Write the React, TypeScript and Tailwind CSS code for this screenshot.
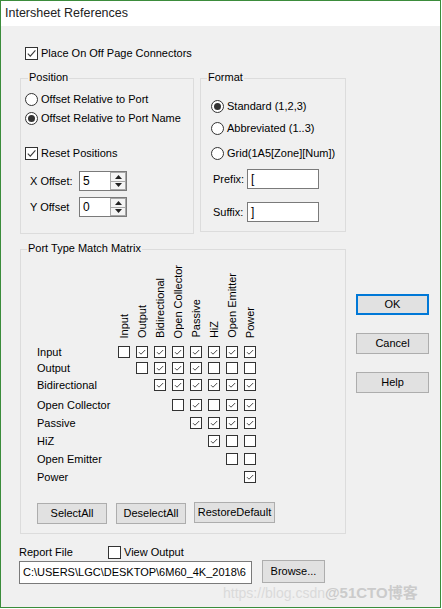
import React from "react";

function CheckBox({ checked }: { checked: boolean }) {
  return (
    <div className="w-[13px] h-[13px] shrink-0 border border-[#333333] bg-white flex items-center justify-center">
      {checked && (
        <svg width="11" height="11" viewBox="0 0 11 11">
          <polyline points="1.8,5.6 4.3,8.2 9.4,2.4" fill="none" stroke="#3a3a3a" strokeWidth="1.1" />
        </svg>
      )}
    </div>
  );
}

function MiniBox({ checked }: { checked: boolean }) {
  return (
    <div className="w-[12px] h-[12px] border border-[#333333] bg-white flex items-center justify-center">
      {checked && (
        <svg width="10" height="10" viewBox="0 0 10 10">
          <polyline points="2,5.2 4,7.2 8.2,3" fill="none" stroke="#4a4a4a" strokeWidth="1" />
        </svg>
      )}
    </div>
  );
}

function Radio({ selected }: { selected: boolean }) {
  return (
    <div className="w-[13px] h-[13px] shrink-0 rounded-full border border-[#333333] bg-white flex items-center justify-center">
      {selected && <div className="w-[7px] h-[7px] rounded-full bg-[#333333]" />}
    </div>
  );
}

function Button({ label, className }: { label: string; className: string }) {
  return (
    <div
      className={
        "h-[21px] bg-[#e1e1e1] border border-[#adadad] flex items-center justify-center text-[11px] leading-none " +
        className
      }
    >
      {label}
    </div>
  );
}

function Spin({ value }: { value: string }) {
  return (
    <div className="w-[48px] h-[20px] border border-[#7a7a7a] bg-white flex">
      <div className="flex-1 flex items-center pl-[3px] text-[12px] leading-none">{value}</div>
      <div className="w-[16px] h-full flex flex-col">
        <div className="flex-1 border border-[#a8a8a8] bg-[#f4f4f4] flex items-center justify-center">
          <svg width="7" height="4" viewBox="0 0 7 4">
            <polygon points="0,4 3.5,0 7,4" fill="#222" />
          </svg>
        </div>
        <div className="flex-1 border border-t-0 border-[#a8a8a8] bg-[#f4f4f4] flex items-center justify-center">
          <svg width="7" height="4" viewBox="0 0 7 4">
            <polygon points="0,0 3.5,4 7,0" fill="#222" />
          </svg>
        </div>
      </div>
    </div>
  );
}

const cols = ["Input", "Output", "Bidirectional", "Open Collector", "Passive", "HiZ", "Open Emitter", "Power"];

const rows: { label: string; start: number; cells: number[]; h: string }[] = [
  { label: "Input", start: 0, cells: [0, 1, 1, 1, 1, 1, 1, 1], h: "h-[16px]" },
  { label: "Output", start: 1, cells: [0, 1, 1, 1, 0, 0, 0], h: "h-[17px]" },
  { label: "Bidirectional", start: 2, cells: [1, 1, 1, 1, 1, 1], h: "h-[20px]" },
  { label: "Open Collector", start: 3, cells: [0, 1, 0, 1, 1], h: "h-[18px]" },
  { label: "Passive", start: 4, cells: [1, 1, 1, 1], h: "h-[18px]" },
  { label: "HiZ", start: 5, cells: [1, 0, 0], h: "h-[18px]" },
  { label: "Open Emitter", start: 6, cells: [0, 0], h: "h-[18px]" },
  { label: "Power", start: 7, cells: [1], h: "h-[12px]" },
];

export default function App() {
  return (
    <div className="relative w-[441px] h-[608px] border border-[#3b8c3b] bg-[#f0f0f0] text-black font-['Liberation_Sans',Arial,sans-serif] text-[11px] overflow-hidden">
      {/* Title bar */}
      <div className="h-[25px] bg-white flex items-center pl-[4px] text-[12.5px] text-[#222]">Intersheet References</div>

      {/* Body */}
      <div className="pl-[19px] flex flex-col">
        <div className="mt-[21px] ml-[5px] h-[13px] flex items-center gap-[3px]">
          <CheckBox checked />
          <span className="leading-none">Place On Off Page Connectors</span>
        </div>

        <div className="mt-[18px] flex items-start">
          {/* left column */}
          <div className="w-[326px] flex flex-col">
            <div className="flex items-start">
              {/* Position */}
              <div className="relative w-[174px] h-[156px] border border-[#dcdcdc] pl-[4px] flex flex-col">
                <span className="absolute -top-[8px] left-[7px] px-[1px] bg-[#f0f0f0] leading-[13px]">Position</span>
                <div className="mt-[14px] h-[13px] flex items-center gap-[3px]">
                  <Radio selected={false} />
                  <span className="leading-none">Offset Relative to Port</span>
                </div>
                <div className="mt-[6px] h-[13px] flex items-center gap-[3px]">
                  <Radio selected />
                  <span className="leading-none">Offset Relative to Port Name</span>
                </div>
                <div className="mt-[22px] h-[13px] flex items-center gap-[3px]">
                  <CheckBox checked />
                  <span className="leading-none">Reset Positions</span>
                </div>
                <div className="mt-[11px] pl-[5px] h-[20px] flex items-center">
                  <span className="w-[49px] leading-none">X Offset:</span>
                  <Spin value="5" />
                </div>
                <div className="mt-[6px] pl-[5px] h-[20px] flex items-center">
                  <span className="w-[49px] leading-none">Y Offset</span>
                  <Spin value="0" />
                </div>
              </div>

              {/* Format */}
              <div className="relative ml-[6px] w-[146px] h-[154px] border border-[#dcdcdc] pl-[10px] flex flex-col">
                <span className="absolute -top-[8px] left-[6px] px-[1px] bg-[#f0f0f0] leading-[13px]">Format</span>
                <div className="mt-[21px] h-[13px] flex items-center gap-[3px]">
                  <Radio selected />
                  <span className="leading-none">Standard (1,2,3)</span>
                </div>
                <div className="mt-[9px] h-[13px] flex items-center gap-[3px]">
                  <Radio selected={false} />
                  <span className="leading-none">Abbreviated (1..3)</span>
                </div>
                <div className="mt-[12px] h-[13px] flex items-center gap-[3px]">
                  <Radio selected={false} />
                  <span className="leading-none">Grid(1A5[Zone][Num])</span>
                </div>
                <div className="mt-[9px] pl-[2px] h-[20px] flex items-center">
                  <span className="w-[34px] leading-none">Prefix:</span>
                  <div className="w-[72px] h-[20px] border border-[#7a7a7a] bg-white flex items-center pl-[3px] text-[12px] leading-none">[</div>
                </div>
                <div className="mt-[13px] pl-[2px] h-[20px] flex items-center">
                  <span className="w-[34px] leading-none">Suffix:</span>
                  <div className="w-[72px] h-[20px] border border-[#7a7a7a] bg-white flex items-center pl-[3px] text-[12px] leading-none">]</div>
                </div>
              </div>
            </div>

            {/* Matrix */}
            <div className="relative mt-[15px] w-[326px] h-[285px] border border-[#dcdcdc] pl-[16px] flex flex-col">
              <span className="absolute -top-[8px] left-[6px] px-[1px] bg-[#f0f0f0] leading-[13px]">Port Type Match Matrix</span>
              <div className="h-[88px] flex">
                <div className="w-[81px]" />
                <div className="grid grid-cols-[repeat(8,12px)] gap-x-[6px] h-full">
                  {cols.map((c) => (
                    <div key={c} className="h-full flex items-end justify-center">
                      <span className="[writing-mode:vertical-rl] rotate-180 leading-[12px] whitespace-nowrap">{c}</span>
                    </div>
                  ))}
                </div>
              </div>
              <div className="mt-[8px] flex flex-col">
                {rows.map((r) => (
                  <div key={r.label} className={"flex items-start " + r.h}>
                    <div className="w-[81px] h-[12px] flex items-center leading-none whitespace-nowrap">{r.label}</div>
                    <div className="grid grid-cols-[repeat(8,12px)] gap-x-[6px]">
                      {cols.map((c, i) => (
                        <div key={c} className="w-[12px] h-[12px]">
                          {i >= r.start && <MiniBox checked={r.cells[i - r.start] === 1} />}
                        </div>
                      ))}
                    </div>
                  </div>
                ))}
              </div>
              <div className="mt-[20px] flex items-start">
                <Button label="SelectAll" className="w-[70px]" />
                <Button label="DeselectAll" className="ml-[9px] w-[70px]" />
                <Button label="RestoreDefault" className="ml-[8px] w-[81px] -mt-px" />
              </div>
            </div>
          </div>

          {/* right column */}
          <div className="ml-[10px] mt-[216px] flex flex-col">
            <div className="w-[73px] h-[21px] bg-[#e1e1e1] border-2 border-[#0078d7] flex items-center justify-center leading-none">OK</div>
            <Button label="Cancel" className="mt-[18px] w-[73px]" />
            <Button label="Help" className="mt-[18px] w-[73px]" />
          </div>
        </div>

        {/* Report */}
        <div className="-ml-px flex flex-col">
          <div className="mt-[12px] h-[13px] flex items-center">
            <span className="w-[89px] leading-none">Report File</span>
            <CheckBox checked={false} />
            <span className="ml-[3px] leading-none">View Output</span>
          </div>
          <div className="mt-[2px] flex items-start">
            <div className="w-[233px] h-[23px] border border-[#7a7a7a] bg-white flex items-center pl-[3px] whitespace-nowrap leading-none">
              C:\USERS\LGC\DESKTOP\6M60_4K_2018\6
            </div>
            <div className="ml-[10px] -mt-px w-[63px] h-[23px] bg-[#e1e1e1] border border-[#adadad] flex items-center justify-center leading-none">
              Browse...
            </div>
          </div>
        </div>
      </div>

      {/* watermark */}
      <div className="absolute left-[222px] top-[584px] flex items-baseline whitespace-nowrap pointer-events-none leading-[15px]">
        <span className="text-[14px] text-[#dadada]">https://blog.csdn</span>
        <span className="text-[15px] font-bold text-[#cbcbcb] font-['Liberation_Sans','Noto_Sans_CJK_SC',sans-serif]">@51CTO博客</span>
      </div>
    </div>
  );
}
